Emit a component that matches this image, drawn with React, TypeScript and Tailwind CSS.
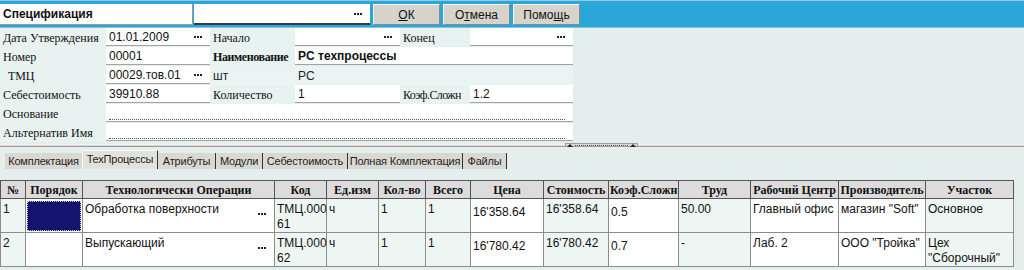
import React from 'react';

const sans = "font-['Liberation_Sans',Arial,sans-serif]";
const serif = "font-['Liberation_Serif','Times_New_Roman',serif]";

const Dots: React.FC = () => (
  <div className="flex gap-[1px] items-center shrink-0">
    <span className="w-[2px] h-[2px] bg-[#222]" />
    <span className="w-[2px] h-[2px] bg-[#222]" />
    <span className="w-[2px] h-[2px] bg-[#222]" />
  </div>
);

const Label: React.FC<{ text: string; bold?: boolean; className?: string }> = ({ text, bold, className = '' }) => (
  <div
    className={`${serif} text-[12px] text-[#111] bg-[#e8f3f1] flex items-center px-[3px] whitespace-nowrap overflow-hidden ${
      bold ? 'font-bold tracking-[-0.4px]' : ''
    } ${className}`}
  >
    {text}
  </div>
);

const Field: React.FC<{ value?: string; dots?: boolean; bold?: boolean; className?: string; dotted?: boolean }> = ({
  value = '',
  dots,
  bold,
  className = '',
  dotted,
}) => (
  <div className={`bg-white border-b border-[#a3a3a3] mb-[1px] flex items-center pl-[3px] pr-[8px] ${className}`}>
    {dotted ? (
      <div className="w-full h-full border-b border-dotted border-[#555] mb-[2px]" />
    ) : (
      <>
        <span className={`${sans} text-[12px] text-[#111] flex-1 whitespace-nowrap ${bold ? 'font-bold' : ''}`}>{value}</span>
        {dots && <Dots />}
      </>
    )}
  </div>
);

const Btn: React.FC<{ pre: string; u: string; post: string }> = ({ pre, u, post }) => (
  <button
    className={`${sans} w-[67px] h-[21px] text-[12px] text-[#111] bg-[#d6d3cb] border border-t-[#f4f4f4] border-l-[#f4f4f4] border-r-[#8a8a8a] border-b-[#8a8a8a]`}
  >
    {pre}
    <span className="underline">{u}</span>
    {post}
  </button>
);

const tabs = [
  { t: 'Комплектация', w: 'w-[77px]' },
  { t: 'ТехПроцессы', w: 'w-[76px]' },
  { t: 'Атрибуты', w: 'w-[58px]' },
  { t: 'Модули', w: 'w-[47px]' },
  { t: 'Себестоимость', w: 'w-[85px]' },
  { t: 'Полная Комплектация', w: 'w-[115px]' },
  { t: 'Файлы', w: 'w-[44px]' },
];

const cols = [
  { h: '№', w: 'w-[25px]', bg: 'bg-[#eef6f4]' },
  { h: 'Порядок', w: 'w-[57px]', bg: 'bg-white' },
  { h: 'Технологически Операции', w: 'w-[192px]', bg: 'bg-white' },
  { h: 'Код', w: 'w-[52px]', bg: 'bg-[#eef6f4]' },
  { h: 'Ед.изм', w: 'w-[52px]', bg: 'bg-[#eef6f4]' },
  { h: 'Кол-во', w: 'w-[47px]', bg: 'bg-[#eef6f4]' },
  { h: 'Всего', w: 'w-[45px]', bg: 'bg-[#eef6f4]' },
  { h: 'Цена', w: 'w-[73px]', bg: 'bg-white' },
  { h: 'Стоимость', w: 'w-[65px]', bg: 'bg-[#eef6f4]' },
  { h: 'Коэф.Сложн', w: 'w-[70px]', bg: 'bg-white' },
  { h: 'Труд', w: 'w-[72px]', bg: 'bg-[#eef6f4]' },
  { h: 'Рабочий Центр', w: 'w-[88px]', bg: 'bg-white' },
  { h: 'Производитель', w: 'w-[87px]', bg: 'bg-white' },
  { h: 'Участок', w: 'w-[88px]', bg: 'bg-[#eef6f4]' },
];

const rows: { cells: React.ReactNode[]; h: string }[] = [
  {
    h: 'h-[33px]',
    cells: [
      '1',
      'navy',
      'Обработка поверхности',
      <>ТМЦ.000<br />61</>,
      'ч',
      '1',
      '1',
      "16'358.64",
      "16'358.64",
      '0.5',
      '50.00',
      'Главный офис',
      'магазин "Soft"',
      'Основное',
    ],
  },
  {
    h: 'h-[30px]',
    cells: [
      '2',
      '',
      'Выпускающий',
      <>ТМЦ.000<br />62</>,
      'ч',
      '1',
      '1',
      "16'780.42",
      "16'780.42",
      '0.7',
      '-',
      'Лаб. 2',
      'ООО "Тройка"',
      <>Цех<br />"Сборочный"</>,
    ],
  },
];

export default function App() {
  return (
    <div className={`w-[1024px] h-[270px] bg-[#e4efed] overflow-hidden ${sans}`}>
      {/* Title bar */}
      <div className="h-[28px] bg-[#2aa6d9] border-t border-[#9cc6ea] border-b border-b-[#7fc6e8] flex items-center gap-[1px] pt-[1px]">
        <div className="w-[193px] h-[21px] bg-white border-r border-b border-[#9a9a9a] flex items-center pl-[3px]">
          <span className="text-[12px] font-bold text-[#111]">Спецификация</span>
        </div>
        <div className="w-[176px] h-[21px] bg-white border-b-2 border-[#3a3a3a] flex items-center justify-end pr-[8px]">
          <Dots />
        </div>
        <div className="flex gap-[3px] ml-[2px]">
          <Btn pre="" u="О" post="К" />
          <Btn pre="О" u="т" post="мена" />
          <Btn pre="Помо" u="щ" post="ь" />
        </div>
      </div>

      {/* Form */}
      <div className="grid grid-cols-[106px_104px_85px_105px_70px_103px] grid-rows-[repeat(6,19px)]">
        <Label text="Дата Утверждения" />
        <Field value="01.01.2009" dots />
        <Label text="Начало" />
        <Field dots />
        <Label text="Конец" />
        <Field dots />

        <Label text="Номер" />
        <Field value="00001" />
        <Label text="Наименование" bold />
        <Field value="PC техпроцессы" bold className="col-span-3" />

        <Label text="ТМЦ" className="pl-[8px]" />
        <Field value="00029.тов.01" dots />
        <div className="bg-[#eaf5f3] flex items-center pl-[3px] text-[12px] text-[#222]">шт</div>
        <div className="col-span-3 bg-[#eaf5f3] flex items-center pl-[3px] text-[12px] text-[#222]">PC</div>

        <Label text="Себестоимость" />
        <Field value="39910.88" />
        <Label text="Количество" />
        <Field value="1" />
        <Label text="Коэф.Сложн" className="tracking-[-0.6px]" />
        <Field value="1.2" />

        <Label text="Основание" />
        <Field dotted className="col-span-5" />

        <Label text="Альтернатив Имя" />
        <Field dotted className="col-span-5" />
      </div>

      {/* Splitter */}
      <div className="h-[6px] flex items-center">
        <div className="h-[3px] w-[565px] bg-[#d9d9d3] border-t border-[#f4f4f4] border-b border-b-[#9c9c9c]" />
        <div className="h-[4px] w-[73px] bg-[#d9d9d3] border border-[#9c9c9c] flex items-center justify-between px-[1px]">
          <span className="w-0 h-0 border-l-[3px] border-r-[3px] border-b-[3px] border-l-transparent border-r-transparent border-b-[#222]" />
          <span className="flex-1 mx-[2px] border-b border-dotted border-[#555]" />
          <span className="w-0 h-0 border-l-[3px] border-r-[3px] border-b-[3px] border-l-transparent border-r-transparent border-b-[#222]" />
        </div>
        <div className="h-[3px] flex-1 bg-[#d9d9d3] border-t border-[#f4f4f4] border-b border-b-[#9c9c9c]" />
      </div>

      {/* Tabs */}
      <div className="flex items-end pl-[5px] h-[21px]">
        {tabs.map((tab, i) => (
          <div
            key={tab.t}
            className={`${tab.w} text-[11px] tracking-[-0.2px] text-[#222] flex items-center justify-center whitespace-nowrap overflow-hidden ${
              i === 1
                ? 'h-[19px] bg-[#e2e2dc] border-t border-l border-[#fafafa] border-r border-r-[#333] pb-[2px]'
                : `h-[16px] bg-[#d9d9d3] ${i === 0 ? '' : 'border-r border-[#333]'}`
            }`}
          >
            {tab.t}
          </div>
        ))}
      </div>

      {/* Table */}
      <div className="mt-[11px]">
        <table className="table-fixed border-collapse w-[1013px]">
          <colgroup>
            {cols.map((c) => (
              <col key={c.h} className={c.w} />
            ))}
          </colgroup>
          <thead>
            <tr className="h-[18px]">
              {cols.map((c) => (
                <th
                  key={c.h}
                  className={`${serif} text-[12px] font-bold text-[#111] bg-[#dcdcdc] border border-[#555] whitespace-nowrap overflow-hidden px-[1px] leading-[14px]`}
                >
                  {c.h}
                </th>
              ))}
            </tr>
          </thead>
          <tbody>
            {rows.map((r, ri) => (
              <tr key={ri} className={r.h}>
                {r.cells.map((cell, ci) => {
                  const col = cols[ci];
                  if (cell === 'navy') {
                    return (
                      <td key={ci} className="border border-[#8c8c8c] p-[1px] bg-white">
                        <div className="h-[30px] bg-[#14136e] border border-dotted border-[#cfcfcf]" />
                      </td>
                    );
                  }
                  const extra = ci === 7 || ci === 9 ? 'pt-[6px]' : 'pt-[3px]';
                  return (
                    <td
                      key={ci}
                      className={`${col.bg} border border-[#8c8c8c] align-top pl-[2px] ${extra} text-[12px] leading-[15px] text-[#111] relative`}
                    >
                      {cell}
                      {ci === 2 && (
                        <div className="absolute right-[8px] top-[14px]">
                          <Dots />
                        </div>
                      )}
                    </td>
                  );
                })}
              </tr>
            ))}
          </tbody>
        </table>
      </div>
    </div>
  );
}
